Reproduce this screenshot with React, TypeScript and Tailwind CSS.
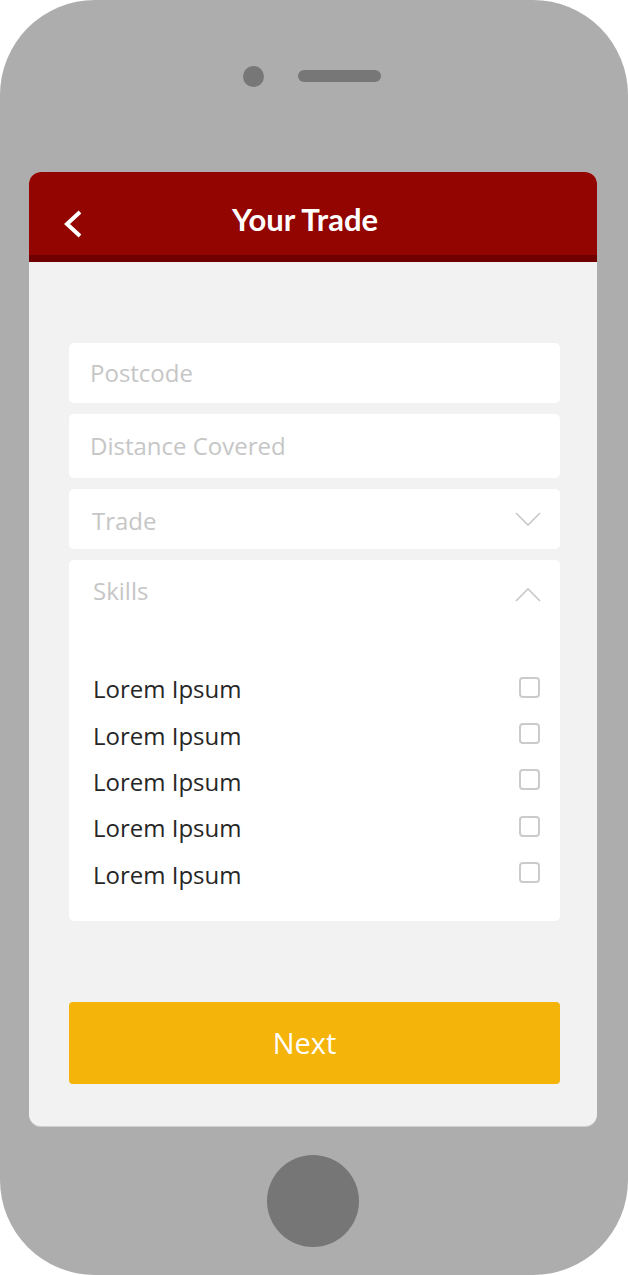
const skills = ["Lorem Ipsum", "Lorem Ipsum", "Lorem Ipsum", "Lorem Ipsum", "Lorem Ipsum"];

function ChevronDown() {
    return (
        <svg width="26" height="14" viewBox="0 0 26 14" fill="none">
            <polyline points="1,1 13,13 25,1" stroke="#c8c8c8" strokeWidth="1.6" />
        </svg>
    );
}

function ChevronUp() {
    return (
        <svg width="26" height="15" viewBox="0 0 26 15" fill="none">
            <polyline points="1,14 13,2 25,14" stroke="#c8c8c8" strokeWidth="1.6" />
        </svg>
    );
}

export default function App() {
    return (
        <div className="w-[628px] h-[1275px] bg-white">
            <div className="w-[628px] h-[1275px] bg-[#adadad] rounded-[95px] flex flex-col">
                {/* top: camera + speaker */}
                <div className="h-[172px] pt-[65px] flex justify-center pr-[4px]">
                    <div className="flex items-center gap-[34px] h-[22px]">
                        <div className="w-[21px] h-[21px] rounded-full bg-[#777777]" />
                        <div className="w-[83px] h-[12px] rounded-full bg-[#777777]" />
                    </div>
                </div>

                {/* screen */}
                <div className="ml-[29px] w-[568px] h-[954px] rounded-[12px] overflow-hidden bg-[#f2f2f2] flex flex-col shadow-[0_1px_0_#cfcfcf]">
                    <div className="h-[90px] bg-[#920500] border-b-[7px] border-[#700000] flex items-center">
                        <div className="w-[60px] pl-[34px] pt-[21px] flex items-center">
                            <svg width="20" height="28" viewBox="0 0 20 28" fill="none">
                                <polyline points="17,2 4,14 17,26" stroke="white" strokeWidth="4" />
                            </svg>
                        </div>
                        <h1
                            className="flex-1 text-center text-white text-[31px] font-bold leading-none pt-[11px]"
                            style={{fontFamily: "Lato, 'Open Sans', sans-serif"}}
                        >
                            Your Trade
                        </h1>
                        <div className="w-[76px]" />
                    </div>

                    <div
                        className="flex-1 pt-[81px] pl-[40px] pr-[37px] pb-[42px] flex flex-col"
                        style={{fontFamily: "'Open Sans', 'Noto Sans', sans-serif"}}
                    >
                        <div className="flex flex-col gap-[11px]">
                            <div className="h-[60px] bg-white rounded-[5px] flex items-center pl-[21px] text-[24px] text-[#c6c6c6]">
                                Postcode
                            </div>
                            <div className="h-[64px] bg-white rounded-[5px] flex items-center pl-[21px] text-[24px] text-[#c6c6c6]">
                                Distance Covered
                            </div>
                            <div className="h-[60px] bg-white rounded-[5px] flex items-center justify-between pl-[23px] pr-[19px] text-[24px] text-[#c6c6c6]">
                                <span className="pt-[4px]">Trade</span>
                                <ChevronDown />
                            </div>
                            <div className="h-[361px] bg-white rounded-[5px] flex flex-col">
                                <div className="h-[62px] flex items-center justify-between pl-[24px] pr-[19px] text-[24px] text-[#c6c6c6]">
                                    <span>Skills</span>
                                    <div className="mt-[7px]">
                                        <ChevronUp />
                                    </div>
                                </div>
                                <ul className="pt-[44px] pl-[24px] pr-[20px]">
                                    {skills.map((s, i) => (
                                        <li key={i} className="h-[46.4px] flex items-center justify-between">
                                            <span className="text-[24px] text-[#262626]">{s}</span>
                                            <span className="w-[21px] h-[21px] rounded-[4px] border-2 border-[#cbcbcb] -mt-[4px]" />
                                        </li>
                                    ))}
                                </ul>
                            </div>
                        </div>

                        <button className="mt-[81px] h-[82px] w-full bg-[#f4b40a] rounded-[4px] text-white text-[29px] pr-[20px]">
                            Next
                        </button>
                    </div>
                </div>

                {/* home button */}
                <div className="flex justify-center pt-[29px] pr-[2px]">
                    <div className="w-[92px] h-[92px] rounded-full bg-[#767676]" />
                </div>
            </div>
        </div>
    );
}
